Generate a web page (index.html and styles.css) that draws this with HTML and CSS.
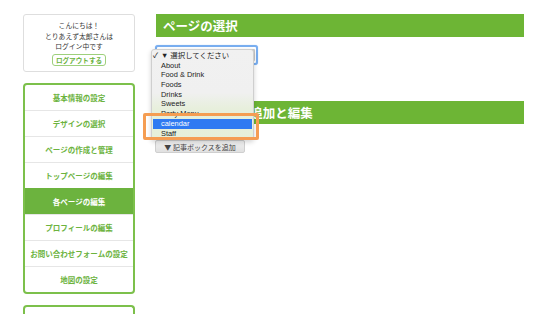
FILE: index.html
```html
<!DOCTYPE html>
<html lang="ja">
<head>
<meta charset="utf-8">
<link rel="stylesheet" href="styles.css">
</head>
<body>
<div class="page">
  <aside class="sidebar">
    <div class="greet">
      <p class="greet-text">こんにちは！<br>とりあえず太郎さんは<br>ログイン中です</p>
      <a class="logout">ログアウトする</a>
    </div>
    <nav class="nav">
      <a class="nav-item">基本情報の設定</a>
      <a class="nav-item">デザインの選択</a>
      <a class="nav-item">ページの作成と管理</a>
      <a class="nav-item">トップページの編集</a>
      <a class="nav-item active">各ページの編集</a>
      <a class="nav-item">プロフィールの編集</a>
      <a class="nav-item">お問い合わせフォームの設定</a>
      <a class="nav-item">地図の設定</a>
    </nav>
    <div class="box-next"></div>
  </aside>
  <main class="main">
    <h2 class="head">ページの選択</h2>
    <div class="select-wrap">
      <div class="select"><span class="select-arrow"></span></div>
      <ul class="menu">
        <li class="opt checked"><span class="check">✓</span>▼ 選択してください</li>
        <li class="opt">About</li>
        <li class="opt">Food &amp; Drink</li>
        <li class="opt">Foods</li>
        <li class="opt">Drinks</li>
        <li class="opt">Sweets</li>
        <li class="opt">Party Menu</li>
        <li class="opt hl">calendar</li>
        <li class="opt">Staff</li>
      </ul>
      <div class="mark"></div>
    </div>
    <h2 class="head head2">記事ボックスの追加と編集</h2>
    <button class="add">▼ 記事ボックスを追加</button>
  </main>
</div>
</body>
</html>
```
FILE: styles.css
```css
* { box-sizing: border-box; margin: 0; padding: 0; }
html, body { background: #fff; }
body {
  font-family: "Liberation Sans", "Noto Sans CJK JP", sans-serif;
  color: #333;
  overflow: hidden;
  height: 314px;
}
.page {
  display: flex;
  gap: 21px;
  padding: 14px 0 0 23px;
  height: 314px;
  overflow: hidden;
}
.sidebar {
  width: 112px;
  flex: none;
  display: flex;
  flex-direction: column;
  gap: 11px;
}
.greet {
  height: 58px;
  border: 1px solid #dedede;
  border-radius: 3px;
  display: flex;
  flex-direction: column;
  align-items: center;
  padding-top: 5px;
}
.greet-text {
  font-family: "Noto Sans CJK JP", sans-serif;
  font-size: 6.8px;
  line-height: 10.5px;
  text-align: center;
  color: #333;
}
.logout {
  margin-top: 2px;
  width: 54px;
  height: 12px;
  border: 1px solid #9ed07c;
  border-radius: 3px;
  font-family: "Noto Sans CJK JP", sans-serif;
  font-size: 6.6px;
  font-weight: bold;
  color: #6cb33e;
  display: flex;
  align-items: center;
  justify-content: center;
}
.nav {
  height: 211px;
  border: 2px solid #7cc04b;
  border-radius: 4px;
  display: flex;
  flex-direction: column;
  overflow: hidden;
}
.nav-item {
  flex: 1;
  display: flex;
  align-items: center;
  justify-content: center;
  font-family: "Noto Sans CJK JP", sans-serif;
  font-size: 7.5px;
  font-weight: bold;
  color: #6cb33e;
  border-top: 1px solid #e6e6e6;
}
.nav-item:first-child { border-top: none; }
.nav-item.active {
  background: #6cb33e;
  color: #fff;
  border-top-color: #6cb33e;
}
.box-next {
  height: 9px;
  flex: none;
  border: 2px solid #7cc04b;
  border-bottom: none;
  border-radius: 4px 4px 0 0;
}
.main {
  width: 368px;
  flex: none;
  display: flex;
  flex-direction: column;
  align-items: flex-start;
}
.head {
  width: 100%;
  height: 23px;
  background: #6db535;
  color: #fff;
  font-family: "Noto Sans CJK JP", sans-serif;
  font-size: 12.5px;
  font-weight: bold;
  line-height: 23px;
  padding-left: 7px;
}
.select-wrap {
  position: relative;
  margin-top: 8px;
  width: 103px;
  height: 20px;
  margin-left: -1px;
}
.select {
  width: 103px;
  height: 20px;
  border: 2px solid #79aef0;
  border-radius: 3px;
  background: #fff;
  box-shadow: 0 0 1px #9cc3f5;
}
.select-arrow {
  position: absolute;
  right: 3px;
  top: 4px;
  width: 4px;
  height: 12px;
  background: #c8c8c8;
  border-radius: 1px;
}
.menu {
  list-style: none;
  position: absolute;
  left: -4px;
  top: 4px;
  width: 103px;
  height: 91px;
  padding-top: 1px;
  background: linear-gradient(#f1f1f1 0, #f0f0f0 48%, #e7efdc 66%, #e6f0d9 100%);
  border: 1px solid #cfcfcf;
  border-radius: 3px;
  box-shadow: 0 2px 5px rgba(0,0,0,0.18);
  z-index: 2;
}
.opt {
  height: 9.7px;
  line-height: 9.7px;
  font-size: 7.4px;
  color: #222;
  padding-left: 9px;
  position: relative;
  white-space: nowrap;
}
.check {
  position: absolute;
  left: 1px;
  top: 0;
}
.opt.hl {
  background: #2f7af2;
  color: #fff;
  margin: 0 1px;
  padding-left: 8px;
}
.mark {
  position: absolute;
  left: -12px;
  top: 68px;
  width: 116px;
  height: 27px;
  border: 3px solid #f59d52;
  border-radius: 2px;
  z-index: 3;
}
.head2 {
  margin-top: 36px;
  position: relative;
  z-index: 1;
}
.add {
  margin-top: 16px;
  margin-left: -1px;
  width: 90px;
  height: 13px;
  border: 1px solid #cfcfcf;
  border-radius: 2px;
  background: linear-gradient(#f2f2f2, #e0e0e0);
  font-family: "Noto Sans CJK JP", sans-serif;
  font-size: 7px;
  color: #444;
  display: flex;
  align-items: center;
  justify-content: center;
}
```
